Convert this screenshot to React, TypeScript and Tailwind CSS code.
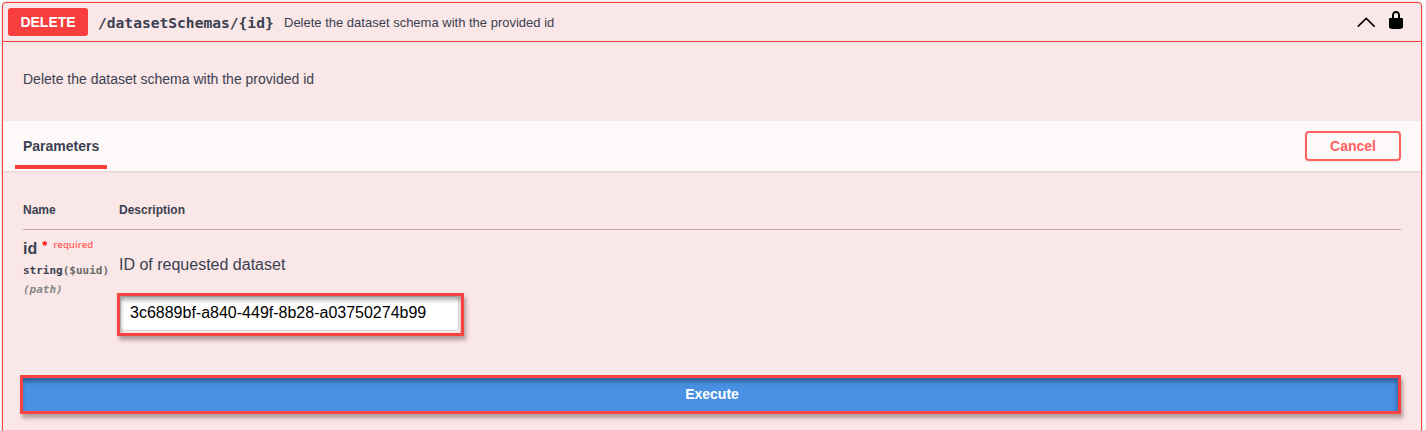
import React from "react";

function Header() {
  return (
    <div className="flex h-[39px] items-center border-b border-[#f93e3e] pl-[5px] pr-[15px] shadow-[0_0_1px_rgba(0,0,0,0.1)]">
      <span className="flex h-7 w-20 items-center justify-center rounded-[3px] bg-[#f93e3e] text-sm font-bold text-white">
        DELETE
      </span>
      <span className="ml-[10px] w-[176px] whitespace-nowrap pt-[2px] font-['DejaVu_Sans_Mono',monospace] text-[14.6px] leading-5 font-bold">
        /datasetSchemas/&#123;id&#125;
      </span>
      <span className="ml-[10px] whitespace-nowrap pt-px text-[13px] leading-5">
        Delete the dataset schema with the provided id
      </span>
      <svg className="ml-auto" width="20" height="20" viewBox="0 0 20 20" fill="none" stroke="#000" strokeWidth="1.5">
        <path d="M1.8 14.6 L10.2 6.4 L18.6 14.6" />
      </svg>
      <svg className="ml-[10px] mb-1" width="20" height="20" viewBox="0 0 20 20">
        <path d="M15.8 8H14V5.6C14 2.703 12.665 1 10 1 7.334 1 6 2.703 6 5.6V8H4c-.553 0-1 .646-1 1.199V17c0 .549.428 1.139.951 1.307l1.197.387C5.672 18.861 6.55 19 7.1 19h5.8c.549 0 1.428-.139 1.951-.307l1.196-.387c.524-.167.953-.757.953-1.306V9.199C17 8.646 16.352 8 15.8 8zM12 8H8V5.199C8 3.754 8.797 3 10 3c1.203 0 2 .754 2 2.199V8z" />
      </svg>
    </div>
  );
}

function SectionBar() {
  return (
    <div className="flex h-[50px] items-center justify-between bg-[#fefaf9] pl-3 pr-5 shadow-[0_1px_2px_rgba(0,0,0,0.1)]">
      <div className="flex h-full w-[92px] flex-col justify-between pb-[2px]">
        <h4 className="pl-2 pt-[15px] text-sm leading-5 font-bold">Parameters</h4>
        <div className="h-1 bg-[#f93e3e]" />
      </div>
      <button className="h-[30px] w-24 rounded-[4px] border-2 border-[#ff6060] text-sm leading-none font-bold text-[#ff6060] shadow-[0_1px_2px_rgba(0,0,0,0.1)]">
        Cancel
      </button>
    </div>
  );
}

function ParameterTable() {
  return (
    <div className="px-5 pt-[29px]">
      <div className="flex h-[30px] border-b border-[#c0aaad] text-xs leading-5 font-bold">
        <div className="w-24">Name</div>
        <div>Description</div>
      </div>
      <div className="flex h-[145px]">
        <div className="w-24 pt-[9px]">
          <div className="flex h-5 text-base leading-5 font-bold">
            <span>id</span>
            <span className="ml-[5px] w-[5px] text-[13px] leading-[14px] font-bold text-[#f00]">*</span>
            <span className="ml-[6px] font-['Open_Sans',sans-serif] text-[9.6px] leading-3 font-semibold text-[#ff6060]">required</span>
          </div>
          <div className="h-5 whitespace-nowrap pt-[2px] font-['DejaVu_Sans_Mono',monospace] text-[11px] leading-5 font-bold">
            string<span className="text-[#6b6b6b]">($uuid)</span>
          </div>
          <div className="pt-px font-['DejaVu_Sans_Mono',monospace] text-[11px] leading-5 font-bold italic text-[#888888]">(path)</div>
        </div>
        <div className="pt-[25px]">
          <p className="text-base leading-5">ID of requested dataset</p>
          <div className="relative mt-[18px] -ml-[2px] h-[43px] w-[347px] border-[3px] border-[#fa4343] shadow-[2px_4px_4px_rgba(70,40,40,0.4)]">
            <input
              readOnly
              defaultValue="3c6889bf-a840-449f-8b28-a03750274b99"
              className="block h-[35px] w-[339px] rounded-[4px] border border-[#d9d9d9] bg-white pb-[2px] pl-[9px] text-base text-black outline-none"
            />
            <div className="pointer-events-none absolute inset-0 shadow-[inset_1px_4px_4px_rgba(0,0,0,0.32)]" />
          </div>
        </div>
      </div>
    </div>
  );
}

export default function App() {
  return (
    <main className="h-[430px] w-[1426px] overflow-hidden bg-[#fafafa] pl-[2px] pt-[2px] font-['Liberation_Sans',Arial,sans-serif] text-[#3b4151]">
      <section className="h-[460px] w-[1420px] rounded-[4px] border border-[#f93e3e] bg-[#fae7e7] shadow-[0_0_3px_rgba(0,0,0,0.19)]">
        <Header />
        <p className="h-[79px] pl-5 pt-[27px] text-sm leading-5">Delete the dataset schema with the provided id</p>
        <SectionBar />
        <ParameterTable />
        <button className="ml-[17px] flex h-[39px] w-[1381px] justify-center border-[3px] border-[#fa4343] bg-[#4990e2] pt-[6px] pl-[3px] text-sm leading-5 font-bold text-white shadow-[2px_4px_4px_rgba(70,40,40,0.4),inset_-1px_4px_4px_rgba(0,0,0,0.32)]">
          Execute
        </button>
      </section>
    </main>
  );
}
